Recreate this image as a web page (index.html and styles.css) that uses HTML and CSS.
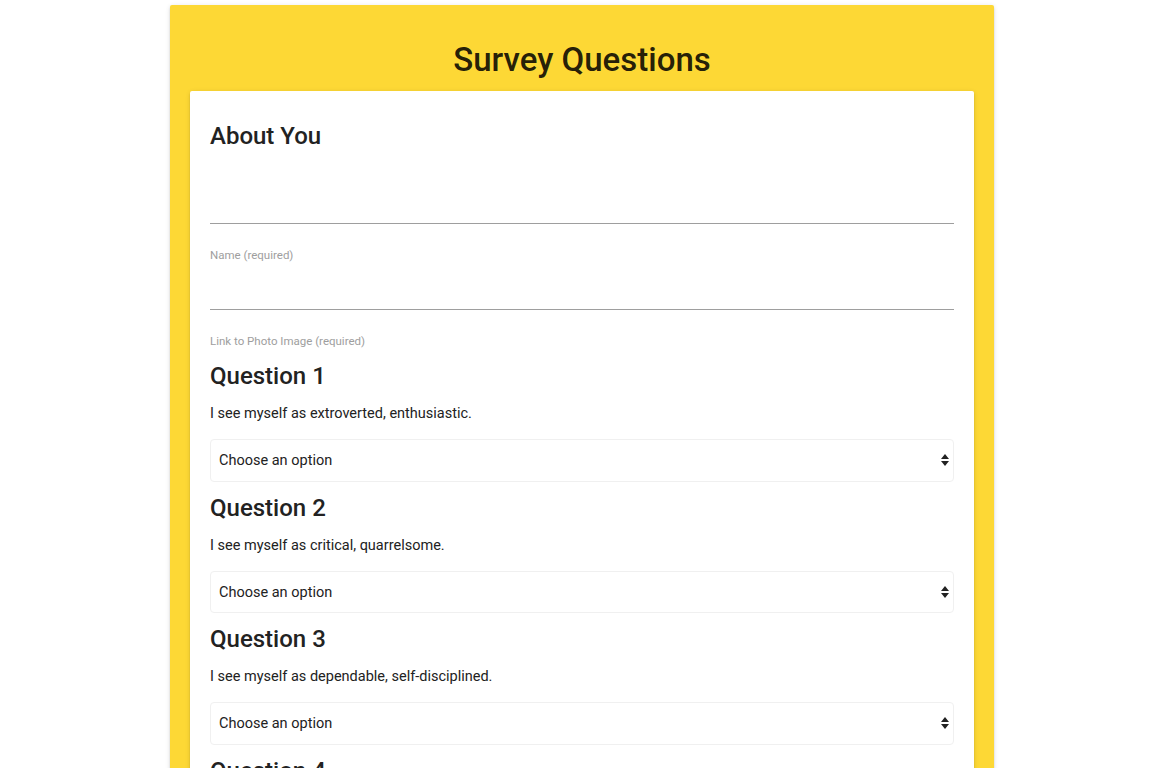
FILE: index.html
```html
<!DOCTYPE html>
<html lang="en">
<head>
<meta charset="utf-8">
<title>Survey Questions</title>
<link rel="stylesheet" href="styles.css">
</head>
<body>
<main class="survey">
  <h1 class="survey-title">Survey Questions</h1>
  <form class="survey-card">
    <h2 class="section-title">About You</h2>
    <input class="text-field first" type="text" id="name">
    <label class="field-label" for="name">Name (required)</label>
    <input class="text-field" type="text" id="photo">
    <label class="field-label" for="photo">Link to Photo Image (required)</label>

    <section class="question">
      <h3 class="question-title">Question 1</h3>
      <p class="question-text">I see myself as extroverted, enthusiastic.</p>
      <div class="select-wrap">
        <select class="select"><option>Choose an option</option></select>
        <svg class="select-arrows" width="8" height="14" viewBox="0 0 8 14"><path d="M4 1 L8 6 H0 Z M0 8 H8 L4 13 Z" fill="#222"/></svg>
      </div>
    </section>

    <section class="question">
      <h3 class="question-title">Question 2</h3>
      <p class="question-text">I see myself as critical, quarrelsome.</p>
      <div class="select-wrap">
        <select class="select"><option>Choose an option</option></select>
        <svg class="select-arrows" width="8" height="14" viewBox="0 0 8 14"><path d="M4 1 L8 6 H0 Z M0 8 H8 L4 13 Z" fill="#222"/></svg>
      </div>
    </section>

    <section class="question">
      <h3 class="question-title">Question 3</h3>
      <p class="question-text">I see myself as dependable, self-disciplined.</p>
      <div class="select-wrap">
        <select class="select"><option>Choose an option</option></select>
        <svg class="select-arrows" width="8" height="14" viewBox="0 0 8 14"><path d="M4 1 L8 6 H0 Z M0 8 H8 L4 13 Z" fill="#222"/></svg>
      </div>
    </section>

    <section class="question">
      <h3 class="question-title">Question 4</h3>
      <p class="question-text">I see myself as anxious, easily upset.</p>
      <div class="select-wrap">
        <select class="select"><option>Choose an option</option></select>
        <svg class="select-arrows" width="8" height="14" viewBox="0 0 8 14"><path d="M4 1 L8 6 H0 Z M0 8 H8 L4 13 Z" fill="#222"/></svg>
      </div>
    </section>
  </form>
</main>
</body>
</html>
```

FILE: styles.css
```css
html, body {
  margin: 0;
  padding: 0;
  background: #ffffff;
}

body {
  font-family: Roboto, "Liberation Sans", sans-serif;
  color: #222222;
  padding-right: 1px;
}

.survey {
  width: 824px;
  margin: 5px auto 0;
  background: #fdd835;
  border-radius: 2px;
  box-shadow: 0 2px 2px 0 rgba(0,0,0,0.14), 0 1px 5px 0 rgba(0,0,0,0.12), 0 3px 1px -2px rgba(0,0,0,0.2);
  padding: 34px 20px 40px;
  box-sizing: border-box;
}

.survey-title {
  margin: 0;
  font-size: 33px;
  line-height: 41px;
  font-weight: 500;
  text-align: center;
  color: rgba(0,0,0,0.87);
}

.survey-card {
  margin-top: 11px;
  background: #ffffff;
  border-radius: 2px;
  box-shadow: 0 2px 2px 0 rgba(0,0,0,0.14), 0 1px 5px 0 rgba(0,0,0,0.12), 0 3px 1px -2px rgba(0,0,0,0.2);
  padding: 31px 20px 20px;
  display: flex;
  flex-direction: column;
}

.section-title,
.question-title {
  margin: 0;
  font-size: 24px;
  line-height: 28px;
  font-weight: 500;
  color: #222222;
}

.text-field {
  display: block;
  height: 42px;
  box-sizing: border-box;
  border: none;
  border-bottom: 1px solid #9e9e9e;
  background: transparent;
  outline: none;
  padding: 0;
  margin: 6px 0 0;
  font: inherit;
}

.text-field.first {
  margin-top: 32px;
}

.field-label {
  display: block;
  margin-top: 24px;
  font-size: 11.5px;
  line-height: 14px;
  color: #9e9e9e;
}

.field-label + .text-field {
  margin-top: 6px;
}

.question {
  margin-top: 14px;
  display: flex;
  flex-direction: column;
}

.question + .question {
  margin-top: 12px;
}

.question-text {
  margin: 14px 0 0;
  font-size: 14.5px;
  line-height: 20px;
  color: #222222;
}

.select-wrap {
  position: relative;
  margin-top: 15px;
}

.select {
  display: block;
  width: 100%;
  height: 43px;
  box-sizing: border-box;
  border: 1px solid #f0f0f0;
  border-radius: 4px;
  background: #ffffff;
  padding: 0 8px;
  font-family: Roboto, "Liberation Sans", sans-serif;
  font-size: 14.5px;
  color: #222222;
  -webkit-appearance: none;
  appearance: none;
  outline: none;
}

.question:nth-of-type(2) .select {
  height: 42px;
}

.select-arrows {
  position: absolute;
  right: 5px;
  top: 14px;
  pointer-events: none;
}
```
